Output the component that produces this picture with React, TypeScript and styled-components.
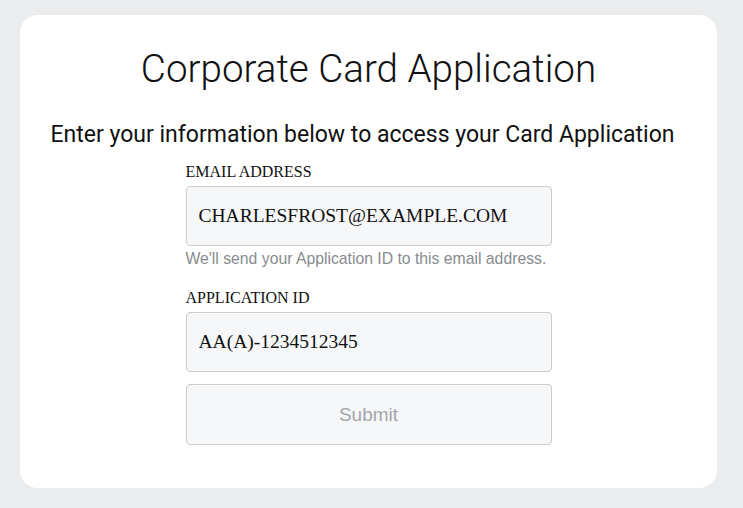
import styled, { createGlobalStyle } from 'styled-components';

const GlobalStyle = createGlobalStyle`
  html, body {
    margin: 0;
    padding: 0;
    background: #ebecee;
  }
  body {
    font-family: "Liberation Serif", "Times New Roman", serif;
  }
`;

const Page = styled.div`
  padding: 15px 26px 20px 20px;
  box-sizing: border-box;
  height: 508px;
`;

const Card = styled.main`
  background: #fff;
  border-radius: 18px;
  height: 473px;
  box-sizing: border-box;
  padding-top: 32px;
  display: flex;
  flex-direction: column;
  align-items: center;
`;

const Title = styled.h1`
  margin: 0;
  font-family: Roboto, "Liberation Sans", sans-serif;
  font-weight: 300;
  font-size: 38.6px;
  line-height: 44px;
  color: #111;
`;

const Subtitle = styled.p`
  margin: 30px 12px 0 0;
  font-family: Roboto, "Liberation Sans", sans-serif;
  font-weight: 400;
  font-size: 23px;
  line-height: 28px;
  color: #111;
`;

const Form = styled.form`
  width: 366px;
  display: flex;
  flex-direction: column;
  margin-top: 13px;
`;

const Field = styled.div`
  display: flex;
  flex-direction: column;
  & + & {
    margin-top: 20px;
  }
`;

const Label = styled.label`
  font-size: 16px;
  line-height: 20px;
  color: #111;
  margin-bottom: 4px;
`;

const Input = styled.input`
  height: 60px;
  box-sizing: border-box;
  border: 1px solid #ccc;
  border-radius: 4px;
  background: #f6f7f9;
  padding: 0 12px;
  font-family: "Liberation Serif", "Times New Roman", serif;
  font-size: 19.5px;
  color: #111;
  outline: none;
`;

const Hint = styled.span`
  font-family: "Liberation Sans", Arial, sans-serif;
  font-size: 15.75px;
  line-height: 18px;
  color: #888b8f;
  margin-top: 4px;
`;

const SubmitButton = styled.button`
  margin-top: 12px;
  height: 61px;
  border: 1px solid #ccc;
  border-radius: 4px;
  background: #f6f7f9;
  font-family: "Liberation Sans", Arial, sans-serif;
  font-size: 19px;
  color: #a3a5a8;
`;

export default function App() {
  return (
    <>
      <GlobalStyle />
      <Page>
        <Card>
          <Title>Corporate Card Application</Title>
          <Subtitle>Enter your information below to access your Card Application</Subtitle>
          <Form onSubmit={(e) => e.preventDefault()}>
            <Field>
              <Label htmlFor="email">EMAIL ADDRESS</Label>
              <Input id="email" defaultValue="CHARLESFROST@EXAMPLE.COM" />
              <Hint>We'll send your Application ID to this email address.</Hint>
            </Field>
            <Field>
              <Label htmlFor="appid">APPLICATION ID</Label>
              <Input id="appid" defaultValue="AA(A)-1234512345" />
            </Field>
            <SubmitButton type="submit" disabled>Submit</SubmitButton>
          </Form>
        </Card>
      </Page>
    </>
  );
}
